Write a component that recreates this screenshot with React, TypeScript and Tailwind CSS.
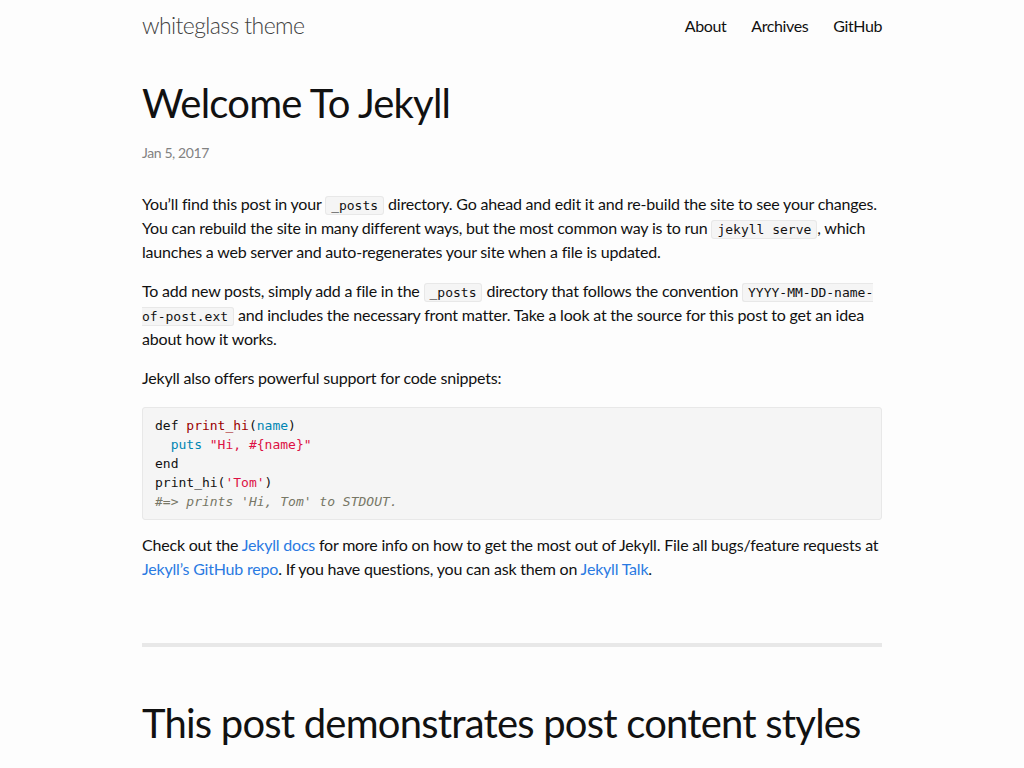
import React from "react";

const sans = "font-['Lato',sans-serif]";
const mono = "font-['DejaVu_Sans_Mono',monospace]";

function Code({ children }: { children: React.ReactNode }) {
  return (
    <code className={`${mono} text-[13px] leading-[16px] tracking-normal bg-[#f5f5f5] border border-[#e8e8e8] rounded-[3px] px-[5px] py-[1px]`}>
      {children}
    </code>
  );
}

function A({ children }: { children: React.ReactNode }) {
  return <a href="#" className="text-[#2a7ae2]">{children}</a>;
}

export default function App() {
  return (
    <div className={`${sans} min-h-screen bg-[#fdfdfd] text-[#111] text-[16px] leading-[24px] tracking-[-0.2px]`}>
      <header className="w-[740px] mx-auto flex items-center justify-between h-[52px]">
        <a href="#" className="text-[23px] font-light text-[#424242] tracking-[-0.6px] -mt-[2px]">whiteglass theme</a>
        <nav className="flex gap-[25px] text-[16px] text-[#111] tracking-[-0.4px]">
          <a href="#">About</a>
          <a href="#">Archives</a>
          <a href="#">GitHub</a>
        </nav>
      </header>

      <main className="w-[740px] mx-auto">
        <article>
          <h1 className="text-[40px] leading-[48px] mt-[27px] tracking-[-0.8px]">Welcome To Jekyll</h1>
          <p className="text-[14px] text-[#828282] mt-[14px] tracking-[-0.4px]">Jan 5, 2017</p>

          <div className="mt-[27px] flex flex-col gap-[15px]">
            <p>
              You’ll find this post in your <Code>_posts</Code> directory. Go ahead and edit it and re-build the site to see your changes.
              You can rebuild the site in many different ways, but the most common way is to run <Code>jekyll&nbsp;serve</Code>, which
              launches a web server and auto-regenerates your site when a file is updated.
            </p>
            <p>
              To add new posts, simply add a file in the <Code>_posts</Code> directory that follows the convention <Code>YYYY-MM-DD-name-<wbr />of-post.ext</Code> and includes the necessary front matter. Take a look at the source for this post to get an idea about how it works.
            </p>
            <p>Jekyll also offers powerful support for code snippets:</p>
            <pre className={`${mono} text-[13px] leading-[19px] tracking-normal text-[#111] bg-[#f5f5f5] border border-[#e8e8e8] rounded-[3px] px-3 py-[8px] mt-[2px] -mb-[2px]`}>
              <span>def </span><span className="text-[#990000]">print_hi</span>(<span className="text-[#0086b3]">name</span>){"\n"}
              {"  "}<span className="text-[#0086b3]">puts</span> <span className="text-[#dd1144]">"Hi, #{"{"}name{"}"}"</span>{"\n"}
              end{"\n"}
              print_hi(<span className="text-[#dd1144]">'Tom'</span>){"\n"}
              <span className="italic text-[#777766]">#=&gt; prints 'Hi, Tom' to STDOUT.</span>
            </pre>
            <p>
              Check out the <A>Jekyll docs</A> for more info on how to get the most out of Jekyll. File all bugs/feature requests at <A>Jekyll’s GitHub repo</A>. If you have questions, you can ask them on <A>Jekyll Talk</A>.
            </p>
          </div>
        </article>

        <hr className="border-0 h-[4px] bg-[#e8e8e8] mt-[62px]" />

        <h1 className="text-[40px] leading-[48px] mt-[52px] tracking-[-0.8px]">This post demonstrates post content styles</h1>
      </main>
    </div>
  );
}
